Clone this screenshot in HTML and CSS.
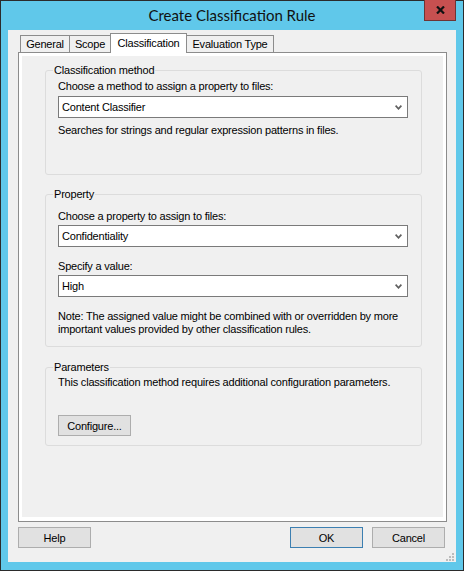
FILE: index.html
```html
<!DOCTYPE html>
<html>
<head>
<meta charset="utf-8">
<link rel="stylesheet" href="styles.css">
</head>
<body>
<div class="window">
  <div class="titlebar">
    <div class="title">Create Classification Rule</div>
    <div class="close">
      <svg width="9" height="8" viewBox="0 0 9 8"><path d="M1 0.5 L8 7.5 M8 0.5 L1 7.5" stroke="#111" stroke-width="2.2" fill="none"/></svg>
    </div>
  </div>
  <div class="client">
    <div class="tabs">
      <div class="tab tab-general">General</div>
      <div class="tab tab-scope">Scope</div>
      <div class="tab tab-class active">Classification</div>
      <div class="tab tab-eval">Evaluation Type</div>
    </div>
    <div class="panel">
      <div class="page">
        <div class="group g-method">
          <div class="legend">Classification method</div>
          <div class="label first">Choose a method to assign a property to files:</div>
          <div class="combo first-combo"><span>Content Classifier</span>
            <svg width="7" height="5" viewBox="0 0 7 5"><path d="M0.6 0.7 L3.5 3.8 L6.4 0.7" stroke="#606060" stroke-width="1.7" fill="none"/></svg>
          </div>
          <div class="label desc">Searches for strings and regular expression patterns in files.</div>
        </div>
        <div class="group g-prop">
          <div class="legend">Property</div>
          <div class="label first">Choose a property to assign to files:</div>
          <div class="combo"><span>Confidentiality</span>
            <svg width="7" height="5" viewBox="0 0 7 5"><path d="M0.6 0.7 L3.5 3.8 L6.4 0.7" stroke="#606060" stroke-width="1.7" fill="none"/></svg>
          </div>
          <div class="label spaced">Specify a value:</div>
          <div class="combo"><span>High</span>
            <svg width="7" height="5" viewBox="0 0 7 5"><path d="M0.6 0.7 L3.5 3.8 L6.4 0.7" stroke="#606060" stroke-width="1.7" fill="none"/></svg>
          </div>
          <div class="label spaced">Note: The assigned value might be combined with or overridden by more important values provided by other classification rules.</div>
        </div>
        <div class="group g-params">
          <div class="legend">Parameters</div>
          <div class="label first">This classification method requires additional configuration parameters.</div>
          <div class="btn configure">Configure...</div>
        </div>
      </div>
    </div>
    <div class="buttons">
      <div class="btn">Help</div>
      <div class="btn default ok">OK</div>
      <div class="btn">Cancel</div>
    </div>
    <svg class="grip" width="9" height="9" viewBox="0 0 9 9">
      <rect x="6" y="0" width="2" height="2" fill="#bcbcbc"/>
      <rect x="3" y="3" width="2" height="2" fill="#bcbcbc"/>
      <rect x="6" y="3" width="2" height="2" fill="#bcbcbc"/>
      <rect x="0" y="6" width="2" height="2" fill="#bcbcbc"/>
      <rect x="3" y="6" width="2" height="2" fill="#bcbcbc"/>
      <rect x="6" y="6" width="2" height="2" fill="#bcbcbc"/>
    </svg>
  </div>
</div>
</body>
</html>
```
FILE: styles.css
```css
* { box-sizing: border-box; }
html, body { margin: 0; padding: 0; }
body {
  font-family: "Liberation Sans", Arial, sans-serif;
  font-size: 11px;
  letter-spacing: -0.2px;
  color: #000;
  background: #fff;
}
.window {
  width: 464px;
  height: 571px;
  border: 1px solid #2b2b2b;
  background: #60c8ea;
  display: flex;
  flex-direction: column;
}
.titlebar {
  height: 29px;
  display: grid;
  grid-template-columns: 1fr auto 1fr;
}
.title {
  grid-column: 2;
  font-family: "Lato", "Open Sans", sans-serif;
  font-size: 15px;
  letter-spacing: 0;
  line-height: 29px;
  color: #111;
  white-space: nowrap;
}
.close {
  grid-column: 3;
  justify-self: end;
  align-self: start;
  width: 32px;
  height: 21px;
  margin-top: -1px;
  margin-right: 7px;
  background: #c75050;
  border: 1px solid #6e3434;
  border-top: none;
  display: flex;
  align-items: center;
  justify-content: center;
  padding-left: 1px;
  padding-bottom: 1px;
}
.client {
  position: relative;
  margin: 0 7px 8px 7px;
  height: 532px;
  background: #f0f0f0;
  padding-top: 3px;
}
.tabs {
  display: flex;
  align-items: flex-end;
  padding-left: 12px;
  height: 19px;
}
.tab {
  height: 17px;
  line-height: 16px;
  border: 1px solid #8c8c8c;
  border-bottom: none;
  background: #f0f0f0;
  text-align: center;
  white-space: nowrap;
  margin-left: -1px;
}
.tab-general { width: 50px; margin-left: 0; }
.tab-scope { width: 42px; }
.tab-class { width: 77px; }
.tab-eval { width: 88px; }
.tab.active {
  height: 20px;
  line-height: 19px;
  margin-bottom: -1px;
  background: #fff;
  z-index: 1;
}
.panel {
  margin-left: 10px;
  width: 429px;
  height: 470px;
  border: 1px solid #8c8c8c;
  background: #fff;
  padding: 3px 3px 4px 3px;
}
.page {
  height: 100%;
  background: #f0f0f0;
  padding-top: 14px;
}
.group {
  margin-left: 23px;
  width: 377px;
  border: 1px solid #dcdcdc;
  border-radius: 3px;
  padding: 0 13px 0 12px;
}
.legend {
  width: fit-content;
  margin: -7px 0 0 -5px;
  padding: 0 1px;
  line-height: 13px;
  background: #f0f0f0;
}
.label { line-height: 13px; }
.combo {
  height: 22px;
  border: 1px solid #7a7a7a;
  background: #fff;
  display: flex;
  align-items: center;
  justify-content: space-between;
  padding: 0 5px 0 3px;
  margin-top: 2px;
}
.g-method { padding-bottom: 37px; }
.g-method .first { margin-top: 3px; }
.g-method .first-combo { margin-top: 3px; }
.g-method .desc { margin-top: 6px; }
.g-prop { margin-top: 19px; padding-bottom: 10px; }
.g-prop .first { margin-top: 9px; }
.g-prop .spaced { margin-top: 13px; }
.g-params { margin-top: 20px; padding-bottom: 9px; }
.g-params .first { margin-top: 2px; }
.btn {
  width: 73px;
  height: 21px;
  border: 1px solid #adadad;
  background: #e1e1e1;
  display: flex;
  align-items: center;
  justify-content: center;
}
.btn.default { border-color: #3c7fb1; }
.configure { margin-top: 26px; }
.buttons {
  display: flex;
  gap: 9px;
  margin-top: 5px;
  padding: 0 11px 0 10px;
}
.buttons .ok { margin-left: auto; }
.grip {
  position: absolute;
  right: 1px;
  bottom: 0;
}
```
